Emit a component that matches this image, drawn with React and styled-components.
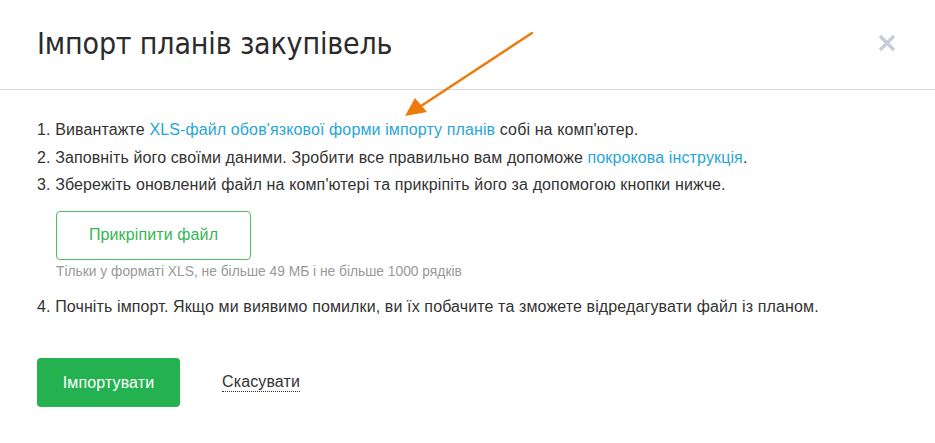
import React from 'react';
import styled, { createGlobalStyle } from 'styled-components';

const GlobalStyle = createGlobalStyle`
  html, body {
    margin: 0;
    padding: 0;
    background: #fff;
  }
  body {
    font-family: "Liberation Sans", Arial, sans-serif;
    color: #333;
  }
`;

const Modal = styled.div`
  position: relative;
  width: 935px;
  height: 443px;
  background: #fff;
  overflow: hidden;
`;

const Header = styled.div`
  display: flex;
  align-items: center;
  justify-content: space-between;
  padding: 0 37px;
  border-bottom: 1px solid #d3d7de;
  box-sizing: border-box;
  height: 90px;
`;

const Title = styled.h1`
  margin: 0;
  font-family: "Liberation Sans Narrow", "DejaVu Sans Condensed", "Liberation Sans", sans-serif;
  font-weight: normal;
  font-size: 30px;
  color: #2b2b2b;
  letter-spacing: -0.15px;
  padding-bottom: 2px;
`;

const Close = styled.button`
  border: none;
  background: none;
  padding: 0;
  width: 20px;
  height: 20px;
  margin-right: 1px;
  margin-top: -3px;
  cursor: pointer;
  display: flex;
  align-items: center;
  justify-content: center;
`;

const Body = styled.div`
  padding: 26px 37px 0 37px;
  font-size: 16px;
  letter-spacing: 0.12px;
`;

const Steps = styled.ol`
  margin: 0;
  padding: 0;
  list-style: none;
`;

const Step = styled.li`
  line-height: 27.5px;
  color: #333;
`;

const Link = styled.a`
  color: #29a5d6;
  text-decoration: none;
  cursor: pointer;
`;

const Attach = styled.div`
  padding: 12px 0 13px 19px;
`;

const AttachButton = styled.button`
  display: block;
  width: 195px;
  height: 49px;
  border: 1px solid #4cbf5e;
  border-radius: 4px;
  background: #fff;
  color: #34b553;
  font-family: "Liberation Sans", Arial, sans-serif;
  font-size: 16px;
  letter-spacing: 0.12px;
  cursor: pointer;
`;

const Hint = styled.div`
  margin-top: 4px;
  font-size: 13.8px;
  letter-spacing: 0;
  line-height: 16px;
  color: #999;
`;

const Actions = styled.div`
  display: flex;
  align-items: center;
  gap: 42px;
  padding-top: 38px;
`;

const ImportButton = styled.button`
  width: 143px;
  height: 49px;
  border: none;
  border-radius: 4px;
  background: #24b251;
  color: #fff;
  font-family: "Liberation Sans", Arial, sans-serif;
  font-size: 16px;
  letter-spacing: 0.12px;
  cursor: pointer;
`;

const Cancel = styled.a`
  font-size: 16px;
  color: #333;
  text-decoration: none;
  border-bottom: 1px dotted #333;
  line-height: 18px;
  cursor: pointer;
`;

const Arrow = styled.svg`
  position: absolute;
  left: 400px;
  top: 28px;
  pointer-events: none;
`;

export default function App() {
  return (
    <>
      <GlobalStyle />
      <Modal>
        <Header>
          <Title>Імпорт планів закупівель</Title>
          <Close aria-label="Закрити">
            <svg width="18" height="18" viewBox="0 0 18 18">
              <path d="M2 2 L16 16 M16 2 L2 16" stroke="#c9ccd6" strokeWidth="3.4" />
            </svg>
          </Close>
        </Header>
        <Body>
          <Steps>
            <Step>
              1. Вивантажте <Link>XLS-файл обов'язкової форми імпорту планів</Link> собі на комп'ютер.
            </Step>
            <Step>
              2. Заповніть його своїми даними. Зробити все правильно вам допоможе{' '}
              <Link>покрокова інструкція</Link>.
            </Step>
            <Step>
              3. Збережіть оновлений файл на комп'ютері та прикріпіть його за допомогою кнопки нижче.
            </Step>
          </Steps>
          <Attach>
            <AttachButton>Прикріпити файл</AttachButton>
            <Hint>Тільки у форматі XLS, не більше 49 МБ і не більше 1000 рядків</Hint>
          </Attach>
          <Steps>
            <Step>
              4. Почніть імпорт. Якщо ми виявимо помилки, ви їх побачите та зможете відредагувати файл із планом.
            </Step>
          </Steps>
          <Actions>
            <ImportButton>Імпортувати</ImportButton>
            <Cancel>Скасувати</Cancel>
          </Actions>
        </Body>
        <Arrow width="140" height="95" viewBox="0 0 140 95">
          <path d="M132 5 L18 80" stroke="#ec7a0c" strokeWidth="2.4" strokeLinecap="round" />
          <path d="M5 88 L15 70 L27 84 Z" fill="#ec7a0c" />
        </Arrow>
      </Modal>
    </>
  );
}
